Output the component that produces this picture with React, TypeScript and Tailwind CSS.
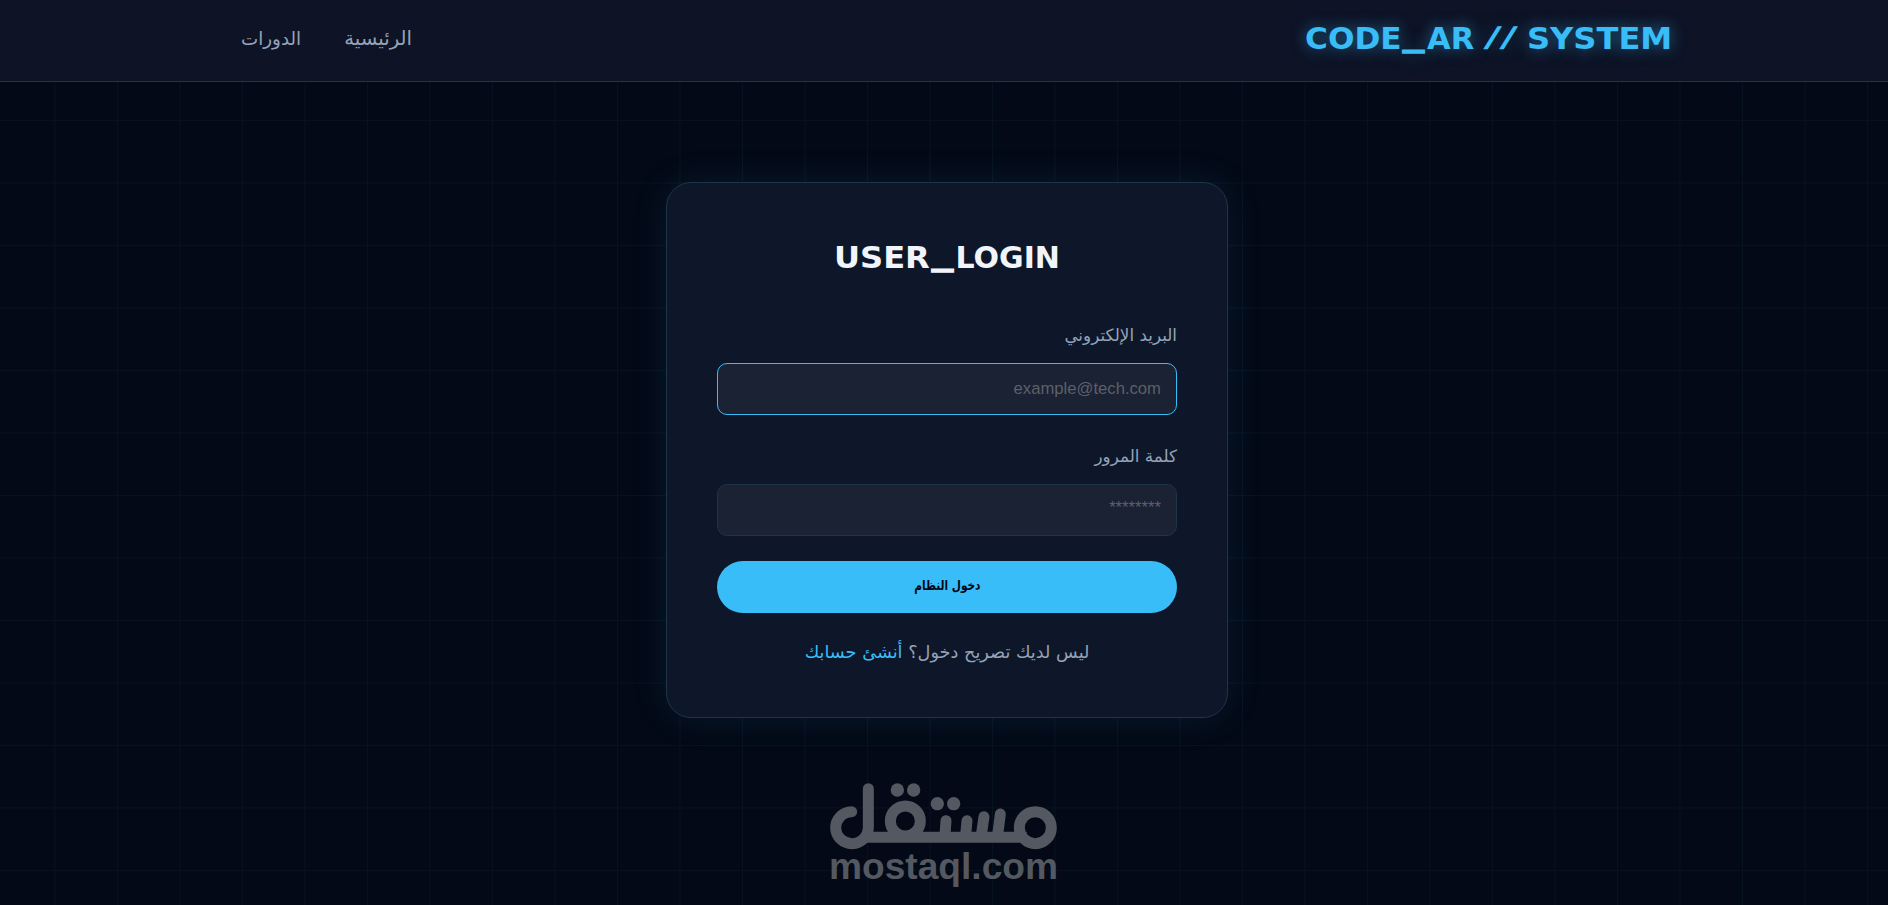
import type { ReactNode } from "react";

const Header = () => (
  <header className="h-[82px] border-b border-[#1e3448] bg-[#0e1326]">
    <div className="flex h-[77px] items-center justify-between pr-[216px] pl-[241px]">
      <div
        dir="ltr"
        className="flex font-['DejaVu_Sans'] text-[30px] leading-none font-bold whitespace-pre text-[#38bdf8] [text-shadow:0_0_15px_rgba(56,189,248,0.5)]"
      >
        <span className="w-[98px] origin-left scale-x-[1.04]">CODE</span>
        <span className="w-[24px] origin-left -translate-y-[3px] scale-x-[1.4] [-webkit-text-stroke:1.5px_#38bdf8]">
          _
        </span>
        <span className="w-[60px] origin-left scale-x-[1.02]">AR</span>
        <span className="w-[40px] origin-left -skew-x-12 scale-x-[1.2] text-[26px] font-normal tracking-[4.5px] [-webkit-text-stroke:1.5px_#38bdf8]">
          //
        </span>
        <span className="w-[145px] origin-left scale-x-[1.07]">SYSTEM</span>
      </div>
      <nav className="flex items-center gap-[43px] font-['DejaVu_Sans'] text-[#94a3b8]">
        <a href="#" className="text-[19.7px]">
          الرئيسية
        </a>
        <a href="#" className="text-[18.3px]">
          الدورات
        </a>
      </nav>
    </div>
  </header>
);

type FieldProps = {
  label: ReactNode;
  type: string;
  placeholder: string;
  focused?: boolean;
};

const Field = ({ label, type, placeholder, focused }: FieldProps) => (
  <div className="mb-[25px]">
    <label className="mb-3 block h-8 font-['DejaVu_Sans'] text-[16.8px] leading-8 text-[#94a3b8]">
      {label}
    </label>
    <input
      type={type}
      placeholder={placeholder}
      className={
        focused
          ? "block h-[52px] w-full rounded-[10px] border border-[#38bdf8] bg-[#1a2234] px-[15px] font-['Liberation_Sans'] text-[16.67px] outline-none placeholder:text-[#5d6067]"
          : "block h-[52px] w-full rounded-[10px] border border-[#1e3448] bg-[#1a2234] px-[15px] pb-1 font-['Liberation_Sans'] text-[16.67px] outline-none placeholder:text-[#5d6067]"
      }
    />
  </div>
);

const LoginCard = () => (
  <main className="mx-auto mt-[100px] h-[536px] w-[562px] translate-x-[3px] rounded-[25px] border border-[#1e3448] bg-[#0e1729] px-[50px] pt-[50px] shadow-[0_0_38px_rgba(56,189,248,0.1)]">
    <h1
      dir="ltr"
      className="mb-[36px] flex justify-center font-['DejaVu_Sans'] text-[30px] leading-[50px] font-bold text-[#f1f5f9]"
    >
      <span className="w-[98px] origin-left scale-x-[1.07]">USER</span>
      <span className="w-[24px] origin-left -translate-y-[3px] scale-x-[1.4] [-webkit-text-stroke:1.5px_#f1f5f9]">
        _
      </span>
      <span className="w-[105px] origin-left">LOGIN</span>
    </h1>
    <Field label="البريد الإلكتروني" type="email" placeholder="example@tech.com" focused />
    <Field label="كلمة المرور" type="password" placeholder="********" />
    <button className="h-[52px] w-full rounded-full bg-[#38bdf8] pb-[3px] font-['DejaVu_Sans'] text-[13.5px] font-bold text-[#020617]">
      <span className="inline-block scale-x-[0.78]">دخول النظام</span>
    </button>
    <p className="mt-[23px] text-center font-['DejaVu_Sans'] text-[17.7px] leading-8 text-[#94a3b8]">
      ليس لديك تصريح دخول؟{" "}
      <a href="#" className="text-[#38bdf8]">
        أنشئ حسابك
      </a>
    </p>
  </main>
);

const Watermark = () => (
  <svg
    viewBox="0 0 810 420"
    className="pointer-events-none absolute top-[765px] left-[810px] h-[140px] w-[270px]"
  >
    <g fill="none" stroke="#545860" strokeWidth="33" strokeLinecap="round">
      <circle cx="676" cy="188" r="48" />
      <circle cx="286" cy="168" r="45" />
      <path d="M125 140A49 48 0 1 0 175 188V71" />
      <path d="M155 217H650" strokeLinecap="butt" />
      <path d="M408 167L405 210M471 167L467 210M522 155L514 210M571 147L563 210" />
    </g>
    <g fill="#545860">
      <circle cx="262" cy="75" r="20" />
      <circle cx="311" cy="75" r="20" />
      <circle cx="382" cy="116" r="20" />
      <circle cx="431" cy="116" r="20" />
      <text
        x="57"
        y="342"
        fontFamily="Liberation Sans"
        fontSize="110"
        fontWeight="bold"
        textLength="687"
        lengthAdjust="spacingAndGlyphs"
        direction="ltr"
      >
        mostaql.com
      </text>
    </g>
  </svg>
);

export default function App() {
  return (
    <div
      dir="rtl"
      className="relative h-[905px] overflow-hidden bg-[#030916] bg-[linear-gradient(#071220_1px,transparent_1px),linear-gradient(90deg,#071220_1px,transparent_1px)] bg-size-[62.5px_62.5px] bg-position-[-8px_-5px]"
    >
      <Header />
      <LoginCard />
      <Watermark />
    </div>
  );
}
